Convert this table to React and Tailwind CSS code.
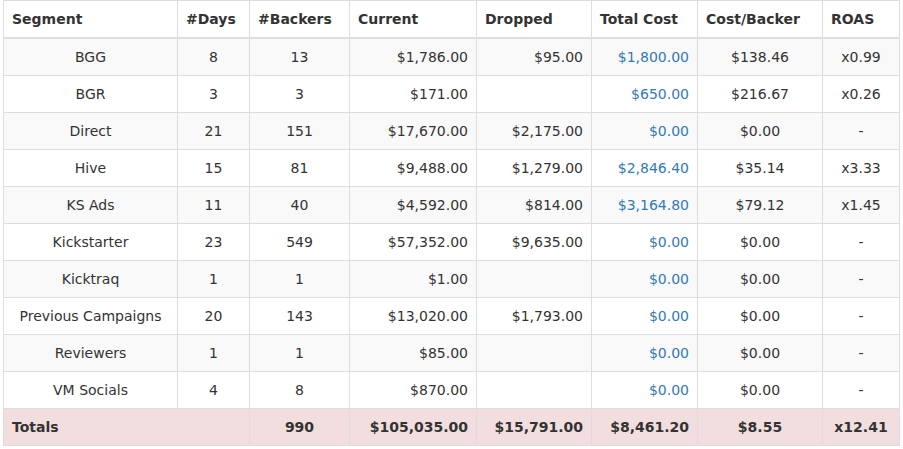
import React from "react";

const rows = [
  ["BGG", "8", "13", "$1,786.00", "$95.00", "$1,800.00", "$138.46", "x0.99"],
  ["BGR", "3", "3", "$171.00", "", "$650.00", "$216.67", "x0.26"],
  ["Direct", "21", "151", "$17,670.00", "$2,175.00", "$0.00", "$0.00", "-"],
  ["Hive", "15", "81", "$9,488.00", "$1,279.00", "$2,846.40", "$35.14", "x3.33"],
  ["KS Ads", "11", "40", "$4,592.00", "$814.00", "$3,164.80", "$79.12", "x1.45"],
  ["Kickstarter", "23", "549", "$57,352.00", "$9,635.00", "$0.00", "$0.00", "-"],
  ["Kicktraq", "1", "1", "$1.00", "", "$0.00", "$0.00", "-"],
  ["Previous Campaigns", "20", "143", "$13,020.00", "$1,793.00", "$0.00", "$0.00", "-"],
  ["Reviewers", "1", "1", "$85.00", "", "$0.00", "$0.00", "-"],
  ["VM Socials", "4", "8", "$870.00", "", "$0.00", "$0.00", "-"],
];

const headers = ["Segment", "#Days", "#Backers", "Current", "Dropped", "Total Cost", "Cost/Backer", "ROAS"];
const aligns = ["text-center", "text-center", "text-center", "text-right", "text-right", "text-right", "text-center", "text-center"];

export default function App() {
  return (
    <div className="bg-white w-[903px] h-[449px] overflow-hidden pl-[3px]" style={{ fontFamily: '"DejaVu Sans", Verdana, sans-serif' }}>
      <table className="table-fixed border-collapse border border-[#ddd] w-[896px] text-[14px] leading-[20px] text-[#333]">
        <colgroup>
          <col className="w-[174px]" />
          <col className="w-[72px]" />
          <col className="w-[100px]" />
          <col className="w-[127px]" />
          <col className="w-[115px]" />
          <col className="w-[106px]" />
          <col className="w-[125px]" />
          <col className="w-[77px]" />
        </colgroup>
        <thead>
          <tr>
            {headers.map((h) => (
              <th key={h} className="border border-[#ddd] border-b-2 px-2 py-2 text-left font-bold whitespace-nowrap">
                {h}
              </th>
            ))}
          </tr>
        </thead>
        <tbody>
          {rows.map((r, i) => (
            <tr key={r[0]} className={i % 2 === 0 ? "bg-[#f9f9f9]" : "bg-white"}>
              {r.map((c, j) => (
                <td
                  key={j}
                  className={`border border-[#ddd] px-2 py-2 whitespace-nowrap ${aligns[j]} ${j === 5 ? "text-[#337ab7]" : ""}`}
                >
                  {c}
                </td>
              ))}
            </tr>
          ))}
          <tr className="bg-[#f2dede] font-bold">
            <td colSpan={2} className="border border-[#ddd] px-2 py-2 text-left">Totals</td>
            <td className="border border-[#ddd] px-2 py-2 text-center">990</td>
            <td className="border border-[#ddd] px-2 py-2 text-right">$105,035.00</td>
            <td className="border border-[#ddd] px-2 py-2 text-right">$15,791.00</td>
            <td className="border border-[#ddd] px-2 py-2 text-right">$8,461.20</td>
            <td className="border border-[#ddd] px-2 py-2 text-center">$8.55</td>
            <td className="border border-[#ddd] px-2 py-2 text-center">x12.41</td>
          </tr>
        </tbody>
      </table>
    </div>
  );
}
